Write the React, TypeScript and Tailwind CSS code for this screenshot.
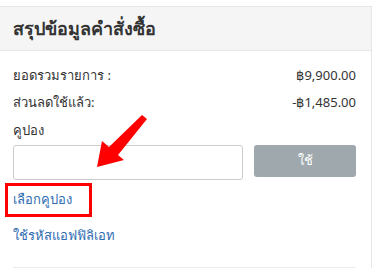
import React from "react";

function Arrow() {
  return (
    <svg className="absolute left-[90px] top-[110px]" width="60" height="65" viewBox="0 0 60 65">
      <polygon
        points="52,5 57,9 28,45 34,50 7,57 12,31 19,37"
        fill="#ff0000"
      />
    </svg>
  );
}

export default function App() {
  return (
    <div className="relative w-[377px] h-[272px] bg-white overflow-hidden font-['Noto_Sans',sans-serif] text-[#333]">
      <div className="mt-[6px] w-[372px] border-t border-r border-[#e6e6e6]">
        <div className="h-[44px] bg-[#f5f5f5] border-b border-[#e6e6e6] flex items-center px-[13px]">
          <h1 className="text-[18px] font-semibold text-[#333]">สรุปข้อมูลคำสั่งซื้อ</h1>
        </div>
        <div className="pl-[13px] pr-[15px] pt-[14px]">
          <div className="flex justify-between items-center h-[22px] text-[13px]">
            <span>ยอดรวมรายการ :</span>
            <span>฿9,900.00</span>
          </div>
          <div className="flex justify-between items-center h-[22px] mt-[5px] text-[13px]">
            <span>ส่วนลดใช้แล้ว:</span>
            <span>-฿1,485.00</span>
          </div>
          <div className="h-[22px] mt-[6px] flex items-center text-[13px]">คูปอง</div>
          <div className="flex gap-[11px] mt-[3px]">
            <input className="w-[230px] h-[35px] border border-[#ccc] rounded-[3px] outline-none" />
            <button className="w-[102px] h-[32px] bg-[#9ea8ad] rounded-[3px] text-white text-[13px]">ใช้</button>
          </div>
          <div className="-ml-[8px] mt-[3px] w-[87px] h-[34px] border-[3px] border-[#ff0000] flex items-center pl-[5px]">
            <span className="text-[13px] text-[#2e6bb0]">เลือกคูปอง</span>
          </div>
          <div className="mt-[8px] h-[22px] flex items-center text-[13px] text-[#2e6bb0]">ใช้รหัสแอฟฟิลิเอท</div>
          <div className="mt-[20px] border-t border-[#ececec]"></div>
        </div>
      </div>
      <Arrow />
    </div>
  );
}
